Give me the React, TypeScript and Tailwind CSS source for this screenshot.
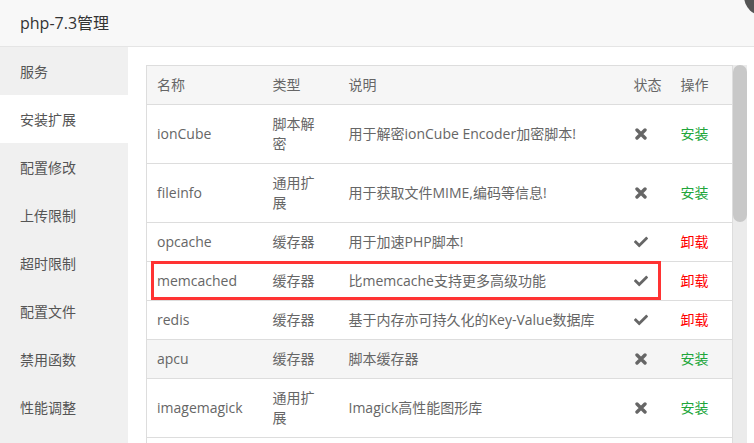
import { FaCheck } from "react-icons/fa";

type Ext = {
  name: string;
  type: string;
  desc: string;
  installed: boolean;
};

const menu = [
  "服务",
  "安装扩展",
  "配置修改",
  "上传限制",
  "超时限制",
  "配置文件",
  "禁用函数",
  "性能调整",
];

const extensions: Ext[] = [
  { name: "ionCube", type: "脚本解密", desc: "用于解密ionCube Encoder加密脚本!", installed: false },
  { name: "fileinfo", type: "通用扩展", desc: "用于获取文件MIME,编码等信息!", installed: false },
  { name: "opcache", type: "缓存器", desc: "用于加速PHP脚本!", installed: true },
  { name: "memcached", type: "缓存器", desc: "比memcache支持更多高级功能", installed: true },
  { name: "redis", type: "缓存器", desc: "基于内存亦可持久化的Key-Value数据库", installed: true },
  { name: "apcu", type: "缓存器", desc: "脚本缓存器", installed: false },
  { name: "imagemagick", type: "通用扩展", desc: "Imagick高性能图形库", installed: false },
];

const cell = "border-t border-[#ddd] px-[10px] py-[9px] align-middle";

// chunky "times" glyph like the old font-awesome one
const Cross = () => (
  <svg viewBox="0 0 12 12" className="ml-[1px] h-[12px] w-[12px]">
    <path
      d="M2 2 L10 10 M10 2 L2 10"
      stroke="#666"
      strokeWidth="3.4"
      strokeLinecap="round"
      fill="none"
    />
  </svg>
);

const App = () => {
  const activeMenu = 1;
  const hoverRow = 5;

  return (
    <div
      className="relative w-[754px] h-[443px] overflow-hidden bg-white text-[14px] text-[#666]"
      style={{ fontFamily: '"Open Sans", "Noto Sans CJK SC", sans-serif' }}
    >
      <header className="h-[47px] border-b border-[#e5e5e5] bg-[#f8f8f8] pl-5 flex items-center">
        <h1 className="text-[16px] text-[#333]">php-7.3管理</h1>
      </header>

      {/* layer close button peeking in the corner */}
      <div className="absolute left-[744px] top-[-24px] h-[40px] w-[40px] rounded-full bg-[#555]" />

      <div className="flex h-[396px]">
        <aside className="w-[128px] shrink-0 bg-[#f0f0f0]">
          {menu.map((item, i) => (
            <div
              key={item}
              className={`h-[48px] pl-5 flex items-center text-[#555] ${
                i === activeMenu ? "bg-white" : ""
              }`}
            >
              {item}
            </div>
          ))}
        </aside>

        <main className="flex-1 pl-[18px] pt-[18px] flex">
          <div className="relative w-[586px]">
            <table className="w-[586px] table-fixed border-collapse border border-[#ddd] leading-[20px]">
              <colgroup>
                <col className="w-[116px]" />
                <col className="w-[76px]" />
                <col className="w-[285px]" />
                <col className="w-[47px]" />
                <col className="w-[62px]" />
              </colgroup>
              <thead>
                <tr className="bg-[#f6f6f6] text-left">
                  <th className={`${cell} font-normal whitespace-nowrap`}>名称</th>
                  <th className={`${cell} font-normal whitespace-nowrap`}>类型</th>
                  <th className={`${cell} font-normal whitespace-nowrap`}>说明</th>
                  <th className={`${cell} font-normal whitespace-nowrap`}>状态</th>
                  <th className={`${cell} font-normal whitespace-nowrap`}>操作</th>
                </tr>
              </thead>
              <tbody>
                {extensions.map((ext, i) => (
                  <tr key={ext.name} className={i === hoverRow ? "bg-[#f5f5f5]" : ""}>
                    <td className={cell}>{ext.name}</td>
                    <td className={cell}>
                      <div className="w-[50px]">{ext.type}</div>
                    </td>
                    <td className={`${cell} whitespace-nowrap`}>{ext.desc}</td>
                    <td className={cell}>
                      {ext.installed ? (
                        <FaCheck className="h-[14px] w-[14px] text-[#666]" />
                      ) : (
                        <Cross />
                      )}
                    </td>
                    <td className={`${cell} whitespace-nowrap`}>
                      {ext.installed ? (
                        <span className="text-[#f00]">卸载</span>
                      ) : (
                        <span className="text-[#20a53a]">安装</span>
                      )}
                    </td>
                  </tr>
                ))}
                {/* next row, scrolled below the fold */}
                <tr>
                  <td className={`${cell} h-[39px]`} />
                  <td className={cell} />
                  <td className={cell} />
                  <td className={cell} />
                  <td className={cell} />
                </tr>
              </tbody>
            </table>

            {/* highlight box around the memcached row */}
            <div className="absolute left-[5px] top-[196px] h-[39px] w-[510px] border-[3px] border-[#f33]" />
          </div>

          <div className="ml-[1px] w-[14px] bg-[#ebebeb]">
            <div className="h-[157px] w-[14px] rounded-[7px] bg-[#c8c8c8]" />
          </div>
        </main>
      </div>
    </div>
  );
};

export default App;
